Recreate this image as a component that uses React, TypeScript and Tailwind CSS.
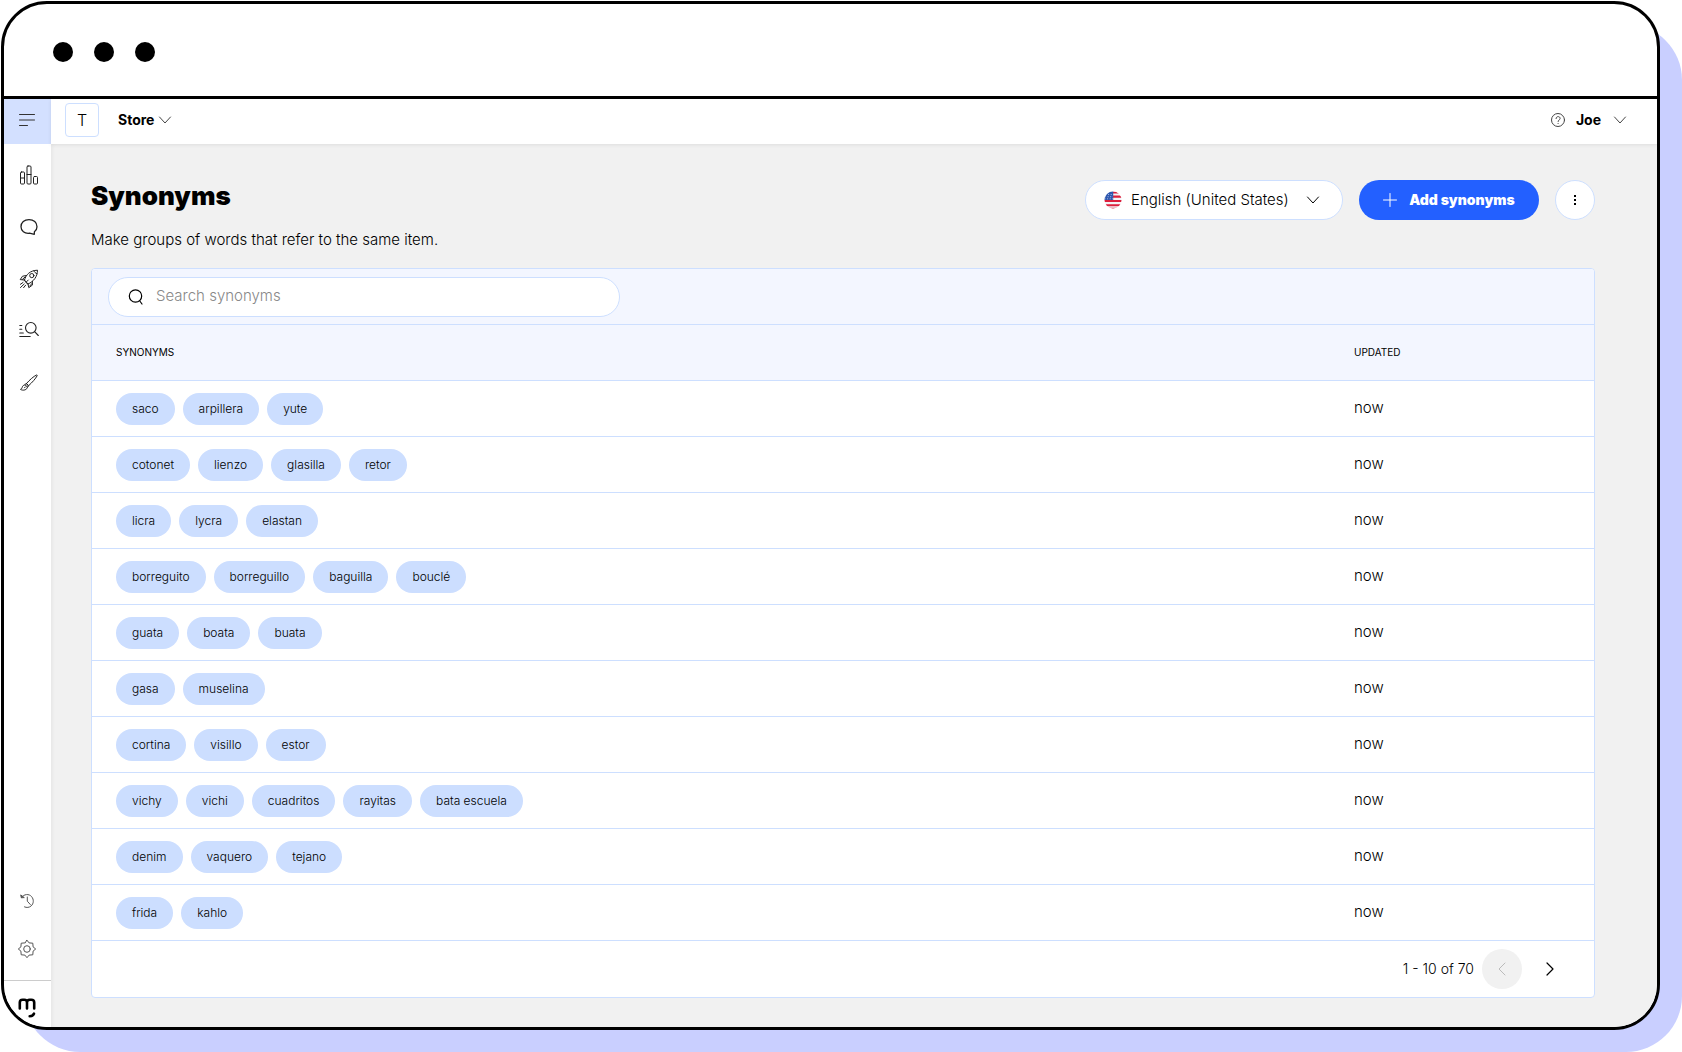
import type { ReactNode } from "react";

const groups = [
  ["saco", "arpillera", "yute"],
  ["cotonet", "lienzo", "glasilla", "retor"],
  ["licra", "lycra", "elastan"],
  ["borreguito", "borreguillo", "baguilla", "bouclé"],
  ["guata", "boata", "buata"],
  ["gasa", "muselina"],
  ["cortina", "visillo", "estor"],
  ["vichy", "vichi", "cuadritos", "rayitas", "bata escuela"],
  ["denim", "vaquero", "tejano"],
  ["frida", "kahlo"],
];

type IconProps = {
  w: number;
  h: number;
  sw?: number;
  className?: string;
  children: ReactNode;
};

function Icon({ w, h, sw = 1, className = "", children }: IconProps) {
  return (
    <svg
      width={w}
      height={h}
      viewBox={`0 0 ${w} ${h}`}
      fill="none"
      stroke="currentColor"
      strokeWidth={sw}
      strokeLinecap="round"
      strokeLinejoin="round"
      className={`shrink-0 ${className}`}
      aria-hidden="true"
    >
      {children}
    </svg>
  );
}

function ChevronDown({ className = "" }: { className?: string }) {
  return (
    <Icon w={14} h={8} className={className}>
      <path d="M1.500 1L7 7l5.500-6" />
    </Icon>
  );
}

const navItems = [
  {
    label: "Analytics",
    icon: (
      <Icon w={20} h={20}>
        <rect x="1.5" y="7" width="4" height="12" rx="1" />
        <path d="M1.5 13h4" />
        <rect x="8" y="1" width="4" height="18" rx="1" />
        <path d="M8 9.500h4" />
        <rect x="14.500" y="11.500" width="4" height="7.500" rx="1" />
      </Icon>
    ),
  },
  {
    label: "Conversations",
    icon: (
      <Icon w={20} h={20} sw={1.3}>
        <path d="M15.300 17.300 10.500 16.200C5.500 16.800 2 14 2 9.800 2 5.500 5.300 2.600 10 2.600s8 2.900 8 7.100c0 2-.9 3.800-2.600 5z" />
      </Icon>
    ),
  },
  {
    label: "Boost",
    icon: (
      <Icon w={20} h={20}>
        <path d="M5.500 11C7 5.500 11 1.500 18.500 1.200 18.300 7.500 15 12.500 9 15z" />
        <path d="M5.500 11 9 15M7.300 6.500 3.500 7.200 1.200 10.600l4.300.4M13.400 12.200v3.900l-3.600 2.600L9 15M3.500 10.300l2.800-2.500M10.800 17l2.300-2.600" />
        <circle cx="12.800" cy="6.600" r="2.100" />
        <path d="M15 1.800c.5 1.500 1.400 2.400 3 2.900M7.300 13l2-2M4 13.500l-2.600 1.800M5.200 15l-3.700 3.500M6.600 16.200l-2 2.500" />
      </Icon>
    ),
  },
  {
    label: "Search",
    icon: (
      <Icon w={20} h={20} sw={1.1}>
        <circle cx="11.800" cy="6.800" r="5.300" />
        <path d="M15.600 10.600l3.700 3.900M.8 4.500h2M.8 8.200h2M.8 12h3.500M.8 15.500h10.400" />
      </Icon>
    ),
  },
  {
    label: "Design",
    icon: (
      <Icon w={20} h={20}>
        <path d="M7.500 10.500C11 6.500 14.500 3.500 17.500 2c.6-.2.900.2.6.800-1.600 3-4.600 6.300-8.400 9.800z" />
        <path d="M7.500 10.500l2.200 2.100-1.200 1.500-2.300-2.200zM6.200 11.900c-1.600 0-2.600.8-3 2.500-.2 1-.8 1.700-1.700 2 2.700 1.600 6.700.6 7-2.300M5.500 14.800l1-1" />
      </Icon>
    ),
  },
];

function TopBar() {
  return (
    <header className="relative z-10 flex h-[45px] items-center bg-white pr-[30px] pb-1 pl-[14px] shadow-[0_1px_4px_rgba(0,0,0,0.08)]">
      <div className="flex size-[34px] items-center justify-center rounded border border-[#cddfff] text-base font-light">
        T
      </div>
      <button className="ml-[19px] flex items-center gap-1 text-sm font-bold">
        Store
        <ChevronDown className="text-[#444]" />
      </button>
      <div className="ml-auto flex items-center gap-2.5">
        <button aria-label="Help" className="text-[#444]">
          <Icon w={16} h={16}>
            <circle cx="8" cy="8" r="6.500" />
            <path d="M6 6.600c0-2.800 4.200-2.600 4.100-.1C10 8 8.100 7.900 8.100 9.500M8.100 11.400v.1" />
          </Icon>
        </button>
        <button className="flex items-center gap-3 text-sm font-bold">
          Joe
          <ChevronDown className="text-[#444]" />
        </button>
      </div>
    </header>
  );
}

function Sidebar() {
  return (
    <aside className="flex w-[47px] shrink-0 flex-col bg-white">
      <button
        aria-label="Menu"
        className="flex h-[45px] items-center justify-center bg-[#d3e0ff] pr-0.5 pb-1"
      >
        <Icon w={16} h={14} className="text-[#333]">
          <path d="M.500 1.500h15M.500 7h15M.500 12.500h8" />
        </Icon>
      </button>
      <nav className="flex flex-col pt-[5px] pl-0.5">
        {navItems.map((item) => (
          <a
            key={item.label}
            href="#"
            aria-label={item.label}
            className="flex h-[52px] items-center justify-center text-[#222]"
          >
            {item.icon}
          </a>
        ))}
      </nav>
      <div className="mt-auto flex flex-col pr-0.5 pb-[7px] text-[#555]">
        <a href="#" aria-label="History" className="flex h-12 items-center justify-center">
          <Icon w={16} h={16}>
            <path d="M2.500 4.500C5 .8 10 .600 12.600 3.600c2.500 3 2.100 7-.4 9.300-2 1.700-4.500 2-6.700 1M8.300 4v4.200l3 3.300" />
            <path d="M1.800 2.300l.5 2.500 2.600-.2z" fill="currentColor" />
          </Icon>
        </a>
        <a href="#" aria-label="Settings" className="flex h-12 items-center justify-center">
          <Icon w={20} h={20}>
            <path d="M10 1.300 12.100 3.900 15.800 4.200 16.100 7.900 18.700 10 16.100 12.100 15.800 15.800 12.100 16.100 10 18.700 7.900 16.100 4.200 15.800 3.900 12.100 1.300 10 3.900 7.900 4.200 4.200 7.900 3.900z" />
            <circle cx="10" cy="10" r="3.300" />
          </Icon>
        </a>
      </div>
      <div className="flex h-[47px] justify-center border-t border-[#ccc] pt-[17px] pr-0.5">
        <Icon w={18} h={20} sw={2.6} className="text-black">
          <path d="M1.800 10.500V4.500c0-2 1-2.700 2.800-2.700H6.300c2 0 2.700 1 2.700 2.700v6M9 4.500c0-1.700.8-2.700 2.700-2.700h1.600c2 0 2.900 1 2.900 2.700v6M11.700 18.200c2 0 3.500-.9 4.300-2.600" />
        </Icon>
      </div>
    </aside>
  );
}

function LanguageSelect() {
  return (
    <div className="relative flex h-10 w-[258px] items-center rounded-full border border-[#cddfff] bg-white">
      <svg width="18" height="18" viewBox="0 0 18 18" className="pointer-events-none absolute left-[18px]" aria-hidden="true">
        <clipPath id="flag">
          <circle cx="9" cy="9" r="8.500" />
        </clipPath>
        <g clipPath="url(#flag)">
          <path fill="#f3f3f6" d="M0 0h18v18H0z" />
          <path fill="#dc1f3c" d="M9 .5h9v2H9zM9 4.500h9v2.200H9zM0 9h18v2.100H0zM0 13.200h18v2H0zM3 16.700h12v1.300H3z" />
          <path fill="#2c56ae" d="M0 0h9.200v9H0z" />
          <path stroke="#c9d6f2" strokeWidth=".8" strokeDasharray="1 1.600" d="M1.500 3.500h7.500M1 5.700h8M.500 7.800H9" />
        </g>
      </svg>
      <select
        aria-label="Language"
        className="h-full w-full appearance-none rounded-full bg-transparent pr-12 pl-[45px] text-[15px] font-light"
      >
        <option>English (United States)</option>
      </select>
      <ChevronDown className="pointer-events-none absolute right-[22px]" />
    </div>
  );
}

function SynonymsTable() {
  return (
    <div className="overflow-hidden rounded border border-[#cddfff] bg-white">
      <div className="flex h-14 items-center border-b border-[#cddfff] bg-[#f3f6ff] px-4">
        <label className="flex h-10 w-[512px] items-center gap-3 rounded-full border border-[#cddfff] bg-white px-[19px]">
          <Icon w={16} h={18} sw={1.2}>
            <circle cx="7.500" cy="8" r="6.200" />
            <path d="M11.800 13l2.200 3" />
          </Icon>
          <input
            type="text"
            aria-label="Search synonyms"
            placeholder="Search synonyms"
            className="min-w-0 flex-1 text-[15px] font-light outline-none placeholder:text-[#888]"
          />
        </label>
      </div>
      <table className="w-full table-fixed border-separate border-spacing-0 text-left">
        <thead>
          <tr className="bg-[#f3f6ff] text-[10px]">
            <th className="h-14 border-b border-[#cddfff] p-0 pl-6 font-normal">SYNONYMS</th>
            <th className="h-14 w-[264px] border-b border-[#cddfff] p-0 pl-6 font-normal">UPDATED</th>
          </tr>
        </thead>
        <tbody>
          {groups.map((words) => (
            <tr key={words[0]}>
              <td className="h-14 border-b border-[#cddfff] p-0 pl-6">
                <div className="flex gap-2">
                  {words.map((word) => (
                    <span
                      key={word}
                      className="flex h-8 items-center rounded-full bg-[#ccdeff] px-4 text-xs font-light"
                    >
                      {word}
                    </span>
                  ))}
                </div>
              </td>
              <td className="h-14 border-b border-[#cddfff] p-0 pl-6 text-[15px] font-light">now</td>
            </tr>
          ))}
        </tbody>
      </table>
      <div className="flex h-14 items-center justify-end gap-2 pr-6 text-sm font-light">
        <span>1 - 10 of 70</span>
        <button
          disabled
          aria-label="Previous page"
          className="flex size-10 items-center justify-center rounded-full bg-[#f1f1f1] text-[#bbb]"
        >
          <Icon w={8} h={14}>
            <path d="M7 1L1 7l6 6" />
          </Icon>
        </button>
        <button aria-label="Next page" className="flex size-10 items-center justify-center rounded-full">
          <Icon w={8} h={14} sw={1.2}>
            <path d="M1 1l6 6-6 6" />
          </Icon>
        </button>
      </div>
    </div>
  );
}

export default function App() {
  return (
    <div className="relative flex min-h-screen bg-white pt-px pr-[22px] pb-[22px] pl-px font-['Inter',sans-serif] text-black">
      {/* Offset backdrop behind the window */}
      <div className="absolute top-6 right-0 bottom-0 left-6 rounded-[56px] bg-[#c9cfff]" />

      <div className="relative flex min-w-0 flex-1 flex-col overflow-hidden rounded-[46px] border-3 border-black bg-white">
        <div className="flex h-[95px] shrink-0 items-center gap-[21px] border-b-3 border-black pt-1 pl-[49px]">
          <span className="size-5 rounded-full bg-black" />
          <span className="size-5 rounded-full bg-black" />
          <span className="size-5 rounded-full bg-black" />
        </div>

        <div className="flex flex-1">
          <Sidebar />
          <div className="flex min-w-0 flex-1 flex-col bg-[#f1f1f1]">
            <TopBar />
            <main className="flex-1 px-10 pt-9 pr-[62px] pb-7 shadow-[inset_3px_0_4px_-2px_rgba(0,0,0,0.06)]">
              <div className="flex h-[88px] items-start justify-between">
                <div>
                  <h1 className="text-[26px] leading-8 font-black">Synonyms</h1>
                  <p className="mt-4 text-[15px] leading-6 font-light">
                    Make groups of words that refer to the same item.
                  </p>
                </div>
                <div className="flex gap-4">
                  <LanguageSelect />
                  <button className="flex h-10 w-[180px] items-center justify-center gap-3 rounded-full bg-[#2360ff] text-sm font-black text-white">
                    <Icon w={14} h={14}>
                      <path d="M7 .500v13M.500 7h13" />
                    </Icon>
                    Add synonyms
                  </button>
                  <button
                    aria-label="More actions"
                    className="flex size-10 items-center justify-center rounded-full border border-[#cddfff] bg-white"
                  >
                    <Icon w={4} h={12} sw={0}>
                      <path fill="currentColor" d="M1 1h2v2H1zM1 5h2v2H1zM1 9h2v2H1z" />
                    </Icon>
                  </button>
                </div>
              </div>
              <SynonymsTable />
            </main>
          </div>
        </div>
      </div>
    </div>
  );
}
